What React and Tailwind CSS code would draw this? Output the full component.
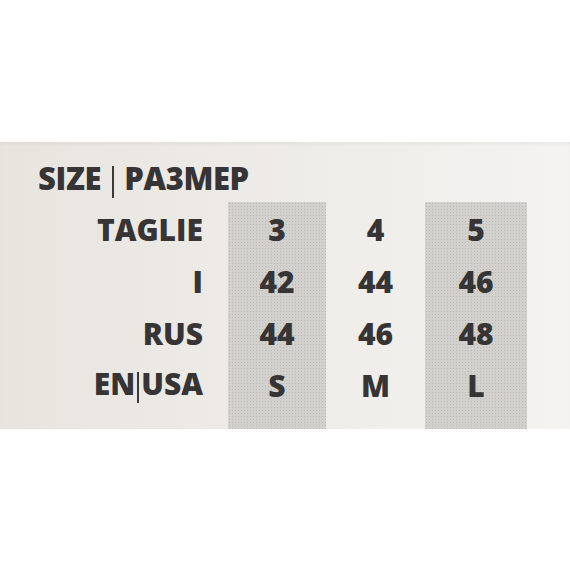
const rows = [
   { label: "TAGLIE", values: ["3", "4", "5"] },
   { label: "I", values: ["42", "44", "46"] },
   { label: "RUS", values: ["44", "46", "48"] },
   { label: "EN|USA", values: ["S", "M", "L"] },
];

const shade =
   "bg-[#d2d1cd] bg-[radial-gradient(#b9b8b4_0.7px,transparent_0.9px)] bg-[length:3px_3px]";

function Bar({ className }) {
   return (
      <span
         className={`inline-block w-[2px] bg-[#3b3939] align-[-8px] ${className}`}
      />
   );
}

function Label({ text }) {
   if (text === "EN|USA") {
      return (
         <span>
            EN
            <Bar className="h-[31px] mx-[2px]" />
            USA
         </span>
      );
   }
   return <span>{text}</span>;
}

function Column({ values, shaded, width }) {
   return (
      <div className={`flex flex-col pt-[2px] ${width} ${shaded ? shade : ""}`}>
         {values.map((v, i) => (
            <div key={i} className="h-[52px] flex items-center justify-center">
               {v}
            </div>
         ))}
      </div>
   );
}

export default function App() {
   return (
      <div className="w-[570px] h-[570px] bg-white flex flex-col overflow-hidden">
         <div className="h-[142px]" />
         <div
            className="h-[287px] flex flex-col bg-gradient-to-r from-[#e8e5df] via-[#eeece8] to-[#f4f3f1] shadow-[inset_0_4px_4px_-2px_rgba(0,0,0,0.05)] text-[#363434] font-extrabold text-[30px] leading-none"
            style={{ fontFamily: '"Open Sans", "Noto Sans", sans-serif' }}
         >
            <div className="pt-[21px] pl-[38px] h-[60px] text-[31px] tracking-[-0.4px]">
               SIZE <Bar className="h-[32px] mx-[3px]" /> PA3MEP
            </div>
            <div className="flex flex-1">
               <div className="w-[228px] pr-[25px] flex flex-col pt-[2px] items-end">
                  {rows.map((r) => (
                     <div key={r.label} className="h-[52px] flex items-center">
                        <Label text={r.label} />
                     </div>
                  ))}
               </div>
               <Column values={rows.map((r) => r.values[0])} shaded width="w-[98px]" />
               <Column values={rows.map((r) => r.values[1])} width="w-[99px]" />
               <Column values={rows.map((r) => r.values[2])} shaded width="w-[102px]" />
            </div>
         </div>
      </div>
   );
}
